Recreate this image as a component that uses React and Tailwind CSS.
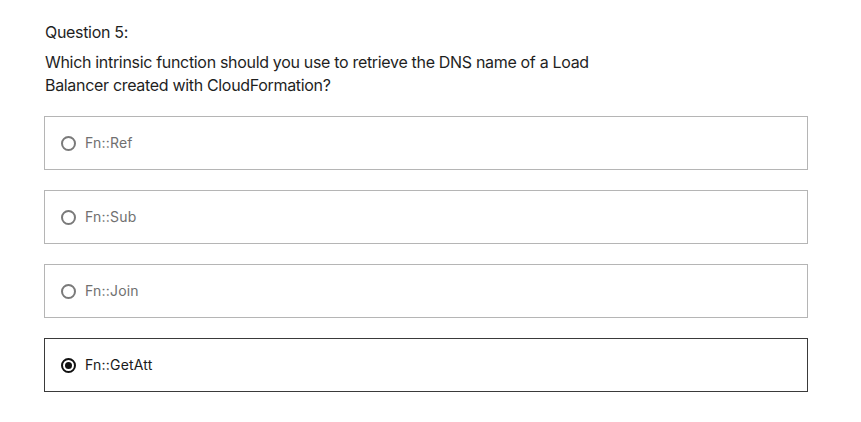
import React, { useState } from 'react';

const options = ['Fn::Ref', 'Fn::Sub', 'Fn::Join', 'Fn::GetAtt'];

const App = () => {
  const [selected, setSelected] = useState(3);

  return (
    <div className="min-h-screen bg-white pl-[44px] pt-5 font-['Inter',sans-serif]">
      <p className="pl-px text-base leading-6 tracking-[-0.32px] text-[#1f1f1f]">Question 5:</p>
      <p className="mt-[7px] max-w-xl pl-px text-base leading-[23px] tracking-[-0.32px] text-[#1f1f1f]">
        Which intrinsic function should you use to retrieve the DNS name of a Load Balancer created with CloudFormation?
      </p>

      <div className="mt-[19px] flex w-[764px] flex-col gap-5">
        {options.map((opt, i) => {
          const active = i === selected;
          return (
            <label
              key={opt}
              onClick={() => setSelected(i)}
              className={`flex h-[54px] cursor-pointer items-center border pl-4 ${
                active ? 'border-[#3a3a3a]' : 'border-[#b5b5b5]'
              }`}
            >
              <span
                className={`flex h-[15px] w-[15px] items-center justify-center rounded-full border-2 ${
                  active ? 'border-[#111]' : 'border-[#7a7a7a]'
                }`}
              >
                {active && <span className="h-[7px] w-[7px] rounded-full bg-[#111]" />}
              </span>
              <span
                className={`ml-[9px] text-sm tracking-[0.2px] ${active ? 'text-[#1a1a1a]' : 'text-[#707070]'}`}
              >
                {opt}
              </span>
            </label>
          );
        })}
      </div>
    </div>
  );
};

export default App;
